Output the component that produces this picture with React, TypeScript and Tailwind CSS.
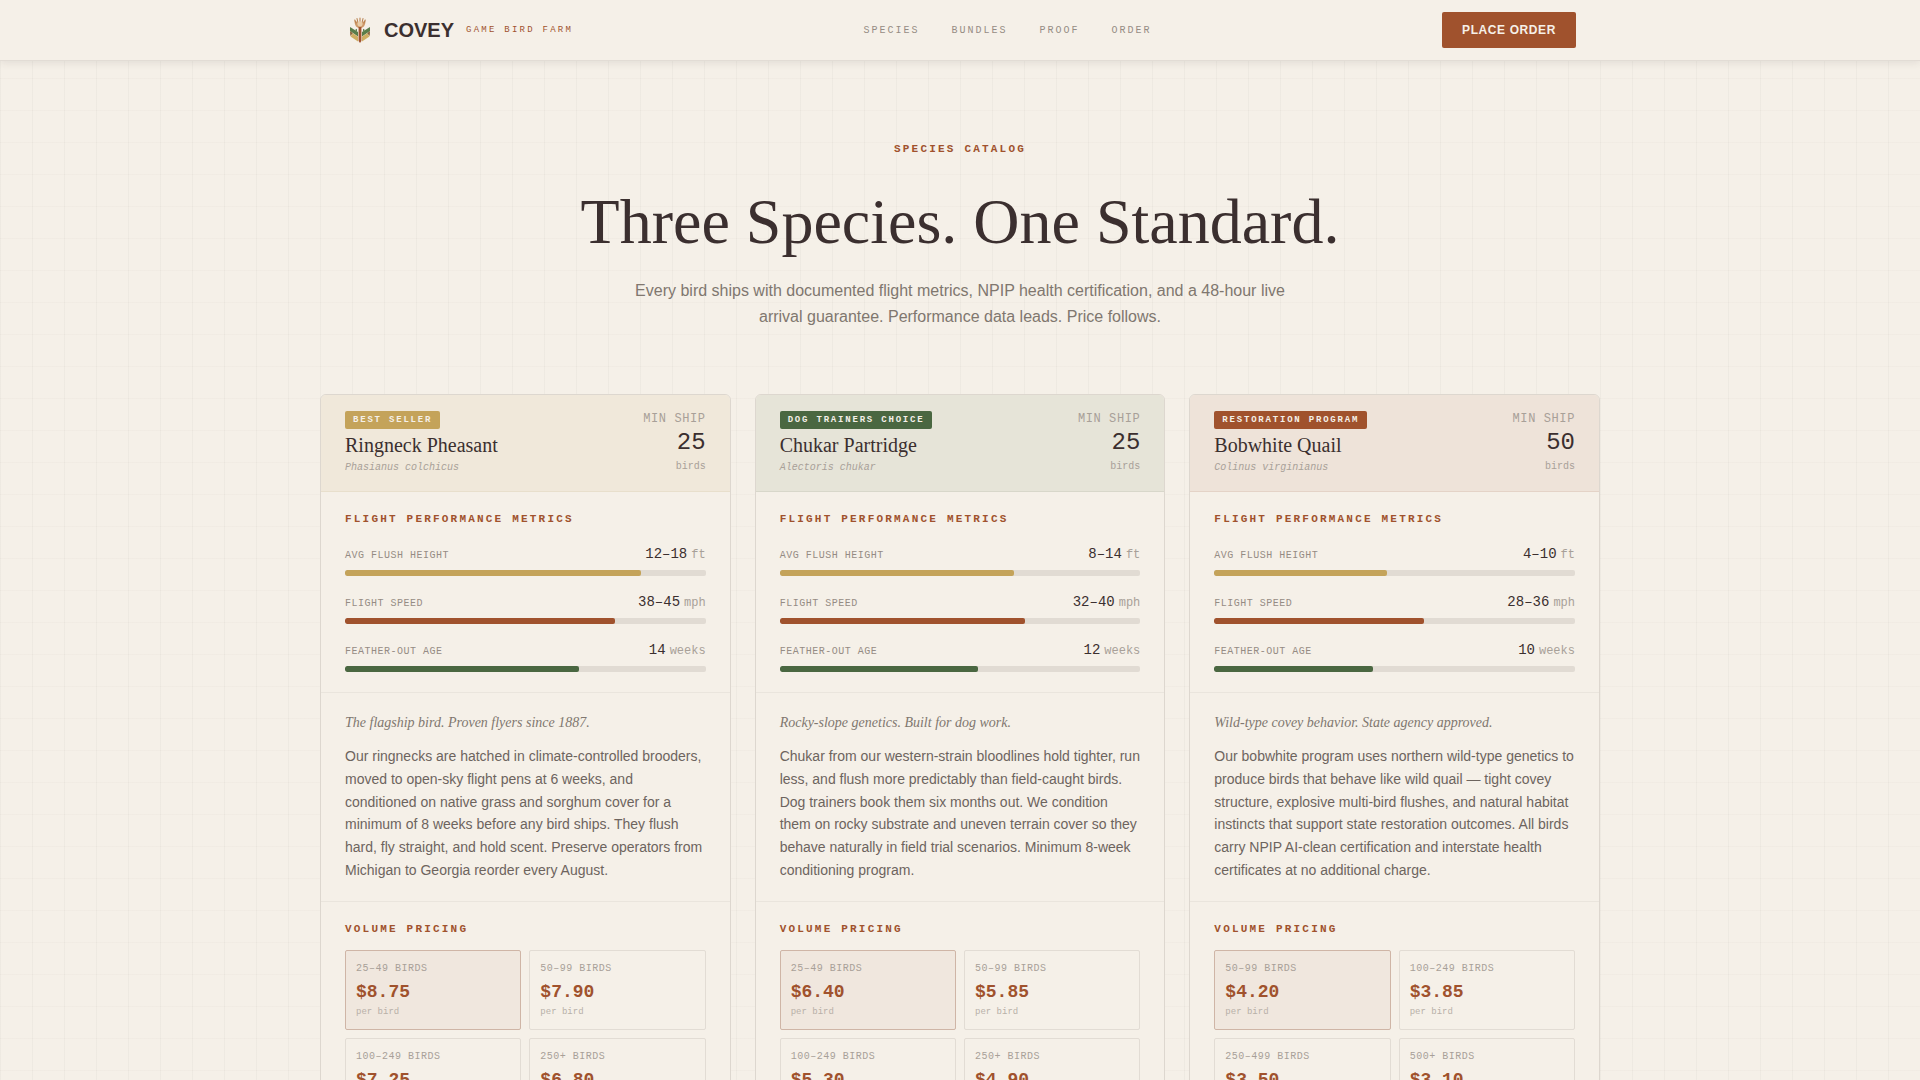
type Metric = { label: string; value: string; unit: string; percent: number; bar: string };
type Tier = { range: string; price: string };
type Species = {
    badge: string;
    badgeClass: string;
    headClass: string;
    name: string;
    latin: string;
    minShip: number;
    metrics: Metric[];
    tagline: string;
    description: string;
    tiers: Tier[];
};

const mono = "font-['Liberation_Mono',monospace]";
const serif = "font-['Liberation_Serif',serif]";

const navLinks = ["Species", "Bundles", "Proof", "Order"];

const metricRows = (height: string, heightPct: number, speed: string, speedPct: number, age: string, agePct: number): Metric[] => [
    { label: "Avg Flush Height", value: height, unit: "ft", percent: heightPct, bar: "bg-[#c4a35a]" },
    { label: "Flight Speed", value: speed, unit: "mph", percent: speedPct, bar: "bg-[#a0522d]" },
    { label: "Feather-Out Age", value: age, unit: "weeks", percent: agePct, bar: "bg-[#4a6741]" },
];

const species: Species[] = [
    {
        badge: "Best Seller",
        badgeClass: "bg-[#c4a35a]",
        headClass: "bg-[#f0e8da] border-[#e8dfcc]",
        name: "Ringneck Pheasant",
        latin: "Phasianus colchicus",
        minShip: 25,
        metrics: metricRows("12–18", 82, "38–45", 75, "14", 65),
        tagline: "The flagship bird. Proven flyers since 1887.",
        description:
            "Our ringnecks are hatched in climate-controlled brooders, moved to open-sky flight pens at 6 weeks, and conditioned on native grass and sorghum cover for a minimum of 8 weeks before any bird ships. They flush hard, fly straight, and hold scent. Preserve operators from Michigan to Georgia reorder every August.",
        tiers: [
            { range: "25–49 birds", price: "$8.75" },
            { range: "50–99 birds", price: "$7.90" },
            { range: "100–249 birds", price: "$7.25" },
            { range: "250+ birds", price: "$6.80" },
        ],
    },
    {
        badge: "Dog Trainers Choice",
        badgeClass: "bg-[#4a6741]",
        headClass: "bg-[#e6e4d8] border-[#d8d7ca]",
        name: "Chukar Partridge",
        latin: "Alectoris chukar",
        minShip: 25,
        metrics: metricRows("8–14", 65, "32–40", 68, "12", 55),
        tagline: "Rocky-slope genetics. Built for dog work.",
        description:
            "Chukar from our western-strain bloodlines hold tighter, run less, and flush more predictably than field-caught birds. Dog trainers book them six months out. We condition them on rocky substrate and uneven terrain cover so they behave naturally in field trial scenarios. Minimum 8-week conditioning program.",
        tiers: [
            { range: "25–49 birds", price: "$6.40" },
            { range: "50–99 birds", price: "$5.85" },
            { range: "100–249 birds", price: "$5.30" },
            { range: "250+ birds", price: "$4.90" },
        ],
    },
    {
        badge: "Restoration Program",
        badgeClass: "bg-[#a0522d]",
        headClass: "bg-[#eee3d9] border-[#e4d3c7]",
        name: "Bobwhite Quail",
        latin: "Colinus virginianus",
        minShip: 50,
        metrics: metricRows("4–10", 48, "28–36", 58, "10", 44),
        tagline: "Wild-type covey behavior. State agency approved.",
        description:
            "Our bobwhite program uses northern wild-type genetics to produce birds that behave like wild quail — tight covey structure, explosive multi-bird flushes, and natural habitat instincts that support state restoration outcomes. All birds carry NPIP AI-clean certification and interstate health certificates at no additional charge.",
        tiers: [
            { range: "50–99 birds", price: "$4.20" },
            { range: "100–249 birds", price: "$3.85" },
            { range: "250–499 birds", price: "$3.50" },
            { range: "500+ birds", price: "$3.10" },
        ],
    },
];

function Logo() {
    return (
        <svg viewBox="0 0 32 32" className="size-8" aria-hidden="true">
            {/* crown */}
            <path d="M10.500 6.500C10.500 11.500 12.500 14 16 14s5.500-2.500 5.500-7.500L18.500 8h-5z" fill="#cf9a6a" />
            <g stroke="#b98250" strokeWidth="1.1" strokeLinecap="round">
                <path d="M16 8V4M13.800 8 13 4.500M18.200 8l.8-3.500M12 9 10.800 6M20 9l1.200-3" />
            </g>
            <circle cx="16" cy="9.800" r="2.600" fill="#e8cda8" />
            {/* wings */}
            <path d="M6 13 14 18v4.500L6 17z" fill="#5a7d4a" />
            <path d="M26 13 18 18v4.500L26 17z" fill="#5a7d4a" />
            <path d="M11 16.100 13 14.800V17.400z" fill="#5a7d4a" />
            <path d="M21 16.100 19 14.800V17.400z" fill="#5a7d4a" />
            <path d="M6 17 9 19.200 6.300 22z" fill="#8a6238" />
            <path d="M26 17 23 19.200 25.700 22z" fill="#8a6238" />
            <path d="M9 19.200 14 22.800v4.700L6.500 22.500z" fill="#cfae62" />
            <path d="M23 19.200 18 22.800v4.700L25.500 22.500z" fill="#cfae62" />
            <path d="M14.600 13h2.800v14L16 29l-1.400-2z" fill="#a0522d" />
        </svg>
    );
}

function SectionLabel({ children }: { children: string }) {
    return <h3 className={`${mono} text-[11px] leading-[14px] font-bold tracking-[0.2em] text-[#a0522d] uppercase`}>{children}</h3>;
}

function SpeciesCard({ bird }: { bird: Species }) {
    return (
        <article className="overflow-hidden rounded-md border border-[#ddd7cf] bg-[#f5f0e8]">
            {/* card head */}
            <div className={`flex items-start justify-between border-b px-6 py-4 ${bird.headClass}`}>
                <div>
                    <span className={`${mono} mb-1 block w-fit rounded-xs px-2 text-[9px] leading-[18px] font-bold tracking-[0.2em] text-[#f5f0e8] uppercase ${bird.badgeClass}`}>
                        {bird.badge}
                    </span>
                    <h2 className={`${serif} text-xl leading-6 text-[#3b2f2f]`}>{bird.name}</h2>
                    <p className={`${mono} mt-1 text-[10px] leading-[14px] text-[#a8a098] italic`}>{bird.latin}</p>
                </div>
                <div className={`${mono} text-right text-[#a8a098]`}>
                    <p className="text-xs leading-4 tracking-wider uppercase">Min Ship</p>
                    <p className="text-2xl leading-8 text-[#3b2f2f]">{bird.minShip}</p>
                    <p className="text-[10px] leading-4">birds</p>
                </div>
            </div>

            {/* metrics */}
            <div className="border-b border-[#eae5dd] px-6 py-5">
                <SectionLabel>Flight Performance Metrics</SectionLabel>
                <div className="mt-4 flex flex-col gap-3.5">
                    {bird.metrics.map((metric) => (
                        <div key={metric.label}>
                            <div className={`${mono} mb-1 flex h-6 items-baseline justify-between leading-[25px]`}>
                                <span className="text-[10px] tracking-wider text-[#958c84] uppercase">{metric.label}</span>
                                <span className="flex items-baseline gap-1 text-sm leading-[25px] text-[#3b2f2f]">
                                    {metric.value}
                                    <span className="text-xs leading-[25px] text-[#a8a098]">{metric.unit}</span>
                                </span>
                            </div>
                            <div className="h-1.5 overflow-hidden rounded-xs bg-[#e1dbd3]">
                                <div className={`h-full rounded-xs ${metric.bar}`} style={{ width: `${metric.percent}%` }} />
                            </div>
                        </div>
                    ))}
                </div>
            </div>

            {/* description */}
            <div className="border-b border-[#eae5dd] px-6 pt-5 pb-[19px]">
                <p className={`${serif} mb-3 text-sm leading-5 text-[#80776f] italic`}>{bird.tagline}</p>
                <p className="text-sm leading-relaxed text-[#6d645e]">{bird.description}</p>
            </div>

            {/* pricing */}
            <div className="px-6 py-5">
                <SectionLabel>Volume Pricing</SectionLabel>
                <div className="mt-3.5 grid grid-cols-2 gap-2">
                    {bird.tiers.map((tier, i) => (
                        <div
                            key={tier.range}
                            className={`${mono} rounded-xs border p-2.5 ${i === 0 ? "border-[#cfb5a6] bg-[#f0e7de]" : "border-[#e2dcd4]"}`}
                        >
                            <p className="mb-1 text-[10px] leading-[15px] tracking-wider text-[#a8a098] uppercase">{tier.range}</p>
                            <p className="text-lg leading-6 font-bold text-[#a0522d]">{tier.price}</p>
                            <p className="mt-0.5 text-[9px] leading-[13px] text-[#b8b0a8]">per bird</p>
                        </div>
                    ))}
                </div>
            </div>
        </article>
    );
}

export default function App() {
    return (
        <div className="min-h-screen bg-[#f5f0e8] bg-[linear-gradient(to_right,#3b2f2f09_1px,transparent_1px),linear-gradient(to_bottom,#3b2f2f05_1px,transparent_1px)] bg-[size:32px_32px] bg-[position:0_14px] font-['Liberation_Sans',sans-serif]">
            <header className="sticky top-0 z-10 border-b border-[#e2dcd5] bg-[#f5f0e8] shadow-[0_2px_8px_#3b2f2f1a]">
                <div className="mx-auto flex h-15 max-w-7xl items-center justify-between px-6">
                    <a href="#" className="flex items-center gap-2">
                        <Logo />
                        <span className="text-xl font-bold text-[#3b2f2f]">COVEY</span>
                        <span className={`${mono} ml-1 pt-0.5 text-[9px] tracking-[0.25em] text-[#a0522d] uppercase`}>Game Bird Farm</span>
                    </a>
                    <nav className={`${mono} flex gap-8 text-[10px] tracking-[0.2em] text-[#958c84] uppercase`}>
                        {navLinks.map((link) => (
                            <a key={link} href={`#${link.toLowerCase()}`}>
                                {link}
                            </a>
                        ))}
                    </nav>
                    <button type="button" className="h-9 rounded-xs bg-[#a0522d] px-5 text-xs font-bold tracking-wider text-[#f5f0e8] uppercase">
                        Place Order
                    </button>
                </div>
            </header>

            <main id="species" className="px-6 pt-20 pb-16">
                <div className="mb-16 text-center">
                    <p className={`${mono} mb-7 text-[11px] leading-[17px] font-bold tracking-[0.2em] text-[#a0522d] uppercase`}>Species Catalog</p>
                    <h1 className={`${serif} mb-5 text-[64px] leading-[72px] text-[#3b2f2f]`}>Three Species. One Standard.</h1>
                    <p className="mx-auto max-w-[680px] text-base leading-relaxed text-[#80776f]">
                        Every bird ships with documented flight metrics, NPIP health certification, and a 48-hour live arrival guarantee. Performance data leads. Price follows.
                    </p>
                </div>
                <div className="mx-auto grid max-w-7xl grid-cols-3 gap-6">
                    {species.map((bird) => (
                        <SpeciesCard key={bird.name} bird={bird} />
                    ))}
                </div>
            </main>
        </div>
    );
}
